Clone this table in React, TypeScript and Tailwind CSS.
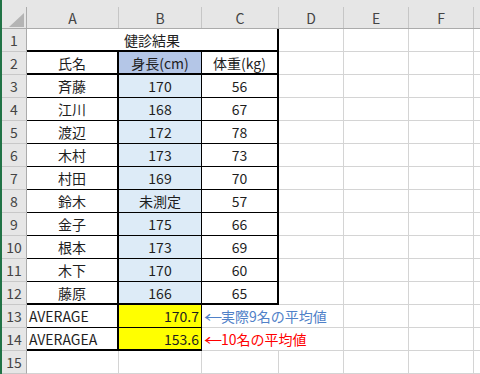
import React from 'react';

type Row = { no: number; name: string; height: string; weight: string };

const rows: Row[] = [
    { no: 3, name: '斉藤', height: '170', weight: '56' },
    { no: 4, name: '江川', height: '168', weight: '67' },
    { no: 5, name: '渡辺', height: '172', weight: '78' },
    { no: 6, name: '木村', height: '173', weight: '73' },
    { no: 7, name: '村田', height: '169', weight: '70' },
    { no: 8, name: '鈴木', height: '未測定', weight: '57' },
    { no: 9, name: '金子', height: '175', weight: '66' },
    { no: 10, name: '根本', height: '173', weight: '69' },
    { no: 11, name: '木下', height: '170', weight: '60' },
    { no: 12, name: '藤原', height: '166', weight: '65' },
];

const grid = 'border-r border-b border-r-[#d4d4d4] border-b-[#d4d4d4]';

function RowHead({ n }: { n: number }) {
    return (
        <div className="w-[25px] shrink-0 h-full flex items-center justify-center bg-[#e6e6e6] border-r border-b border-r-[#ababab] border-b-[#c8c8c8] text-[#444]">
            {n}
        </div>
    );
}

// empty D, E, F, G cells on the right of the sheet
function Blank() {
    return (
        <>
            <div className={`w-[65px] shrink-0 h-full ${grid}`} />
            <div className={`w-[65px] shrink-0 h-full ${grid}`} />
            <div className={`w-[65px] shrink-0 h-full ${grid}`} />
            <div className="flex-1 h-full border-b border-b-[#d4d4d4]" />
        </>
    );
}

// Excel draws ← full width, so stretch it a bit
function Arrow() {
    return <span className="inline-block w-[17px] scale-x-[1.3] origin-left">←</span>;
}

export default function App() {
    return (
        <div className="w-[480px] h-[374px] overflow-hidden flex bg-white text-[14px] leading-none text-[#1e1e1e] font-['Noto_Sans_CJK_JP',sans-serif]">
            <div className="w-[2px] shrink-0 bg-[#217346]" />
            <div className="flex-1 flex flex-col">
                <div className="h-[7px] shrink-0 bg-[#e6e6e6]" />

                {/* column headers */}
                <div className="h-[22px] shrink-0 flex bg-[#e6e6e6] border-b border-b-[#ababab] text-[#444]">
                    <div className="w-[25px] shrink-0 h-full flex items-end justify-end pr-[2px] pb-[1px] border-r border-r-[#ababab]">
                        <svg width="15" height="14" viewBox="0 0 15 14">
                            <polygon points="15,0 15,14 0,14" fill="#b4b4b4" />
                        </svg>
                    </div>
                    <div className="w-[92px] shrink-0 flex items-center justify-center border-r border-r-[#c6c6c6]">A</div>
                    <div className="w-[83px] shrink-0 flex items-center justify-center border-r border-r-[#c6c6c6]">B</div>
                    <div className="w-[77px] shrink-0 flex items-center justify-center border-r border-r-[#c6c6c6]">C</div>
                    <div className="w-[65px] shrink-0 flex items-center justify-center border-r border-r-[#c6c6c6]">D</div>
                    <div className="w-[65px] shrink-0 flex items-center justify-center border-r border-r-[#c6c6c6]">E</div>
                    <div className="w-[65px] shrink-0 flex items-center justify-center border-r border-r-[#c6c6c6]">F</div>
                    <div className="flex-1" />
                </div>

                {/* row 1 */}
                <div className="h-[23px] shrink-0 flex">
                    <RowHead n={1} />
                    <div className="w-[252px] shrink-0 h-full flex items-center justify-center border-r-2 border-b-2 border-r-black border-b-black">
                        健診結果
                    </div>
                    <Blank />
                </div>

                {/* row 2 */}
                <div className="h-[23px] shrink-0 flex">
                    <RowHead n={2} />
                    <div className="w-[92px] shrink-0 h-full flex items-center justify-center border-r-2 border-b-2 border-r-black border-b-black">氏名</div>
                    <div className="w-[83px] shrink-0 h-full flex items-center justify-center bg-[#b4c6e7] border-r border-b-2 border-r-black border-b-black">身長(cm)</div>
                    <div className="w-[77px] shrink-0 h-full flex items-center justify-center border-r-2 border-b-2 border-r-black border-b-black">体重(kg)</div>
                    <Blank />
                </div>

                {rows.map((r) => {
                    const last = r.no === 12;
                    return (
                        <div key={r.no} className="h-[23px] shrink-0 flex">
                            <RowHead n={r.no} />
                            <div className={`w-[92px] shrink-0 h-full flex items-center justify-center border-r-2 border-r-black border-b-black ${last ? 'border-b-2' : 'border-b'}`}>
                                {r.name}
                            </div>
                            <div className={`w-[83px] shrink-0 h-full flex items-center justify-center bg-[#ddebf7] border-r border-r-black border-b-black ${last ? 'border-b-2' : 'border-b'}`}>
                                {r.height}
                            </div>
                            <div className={`w-[77px] shrink-0 h-full flex items-center justify-center border-r-2 border-r-black border-b-black ${last ? 'border-b-2' : 'border-b'}`}>
                                {r.weight}
                            </div>
                            <Blank />
                        </div>
                    );
                })}

                {/* rows 13-14: averages */}
                <div className="h-[23px] shrink-0 flex">
                    <RowHead n={13} />
                    <div className="w-[92px] shrink-0 h-full flex items-center pl-[2px] border-r-2 border-b border-r-black border-b-black">AVERAGE</div>
                    <div className="w-[83px] shrink-0 h-full flex items-center justify-end pr-[2px] bg-[#ffff00] border-r border-b border-r-black border-b-black">170.7</div>
                    <div className="w-[142px] shrink-0 h-full flex items-center pl-[2px] whitespace-nowrap text-[#5081c8] border-r border-b border-r-[#d4d4d4] border-b-[#d4d4d4]">
                        <Arrow />実際9名の平均値
                    </div>
                    <div className={`w-[65px] shrink-0 h-full ${grid}`} />
                    <div className={`w-[65px] shrink-0 h-full ${grid}`} />
                    <div className="flex-1 h-full border-b border-b-[#d4d4d4]" />
                </div>
                <div className="h-[23px] shrink-0 flex">
                    <RowHead n={14} />
                    <div className="w-[92px] shrink-0 h-full flex items-center pl-[2px] border-r-2 border-b-2 border-r-black border-b-black">AVERAGEA</div>
                    <div className="w-[83px] shrink-0 h-full flex items-center justify-end pr-[2px] bg-[#ffff00] border-r border-b-2 border-r-black border-b-black">153.6</div>
                    <div className="w-[142px] shrink-0 h-full flex items-center pl-[2px] whitespace-nowrap text-[#ff0000] border-r border-b border-r-[#d4d4d4] border-b-[#d4d4d4]">
                        <Arrow />10名の平均値
                    </div>
                    <div className={`w-[65px] shrink-0 h-full ${grid}`} />
                    <div className={`w-[65px] shrink-0 h-full ${grid}`} />
                    <div className="flex-1 h-full border-b border-b-[#d4d4d4]" />
                </div>

                {/* row 15 */}
                <div className="h-[23px] shrink-0 flex">
                    <RowHead n={15} />
                    <div className={`w-[92px] shrink-0 h-full ${grid}`} />
                    <div className={`w-[83px] shrink-0 h-full ${grid}`} />
                    <div className={`w-[77px] shrink-0 h-full ${grid}`} />
                    <Blank />
                </div>
            </div>
        </div>
    );
}
